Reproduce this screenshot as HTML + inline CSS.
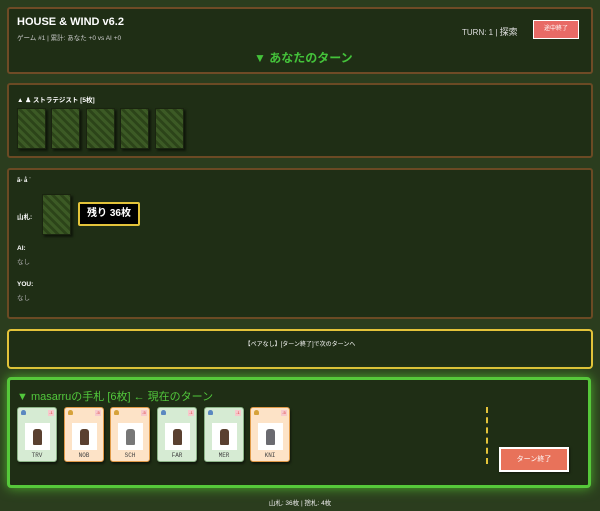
<!DOCTYPE html>
<html><head><meta charset="utf-8"><style>
*{box-sizing:border-box;margin:0;padding:0}
body{width:600px;height:511px;background:#2b3d1e;font-family:"Liberation Sans","Noto Sans CJK JP",sans-serif;color:#fff;position:relative;overflow:hidden}
.p{position:absolute;background:#1f2e15;border:2px solid #6b4a24;border-radius:3px}
.a{position:absolute;white-space:nowrap}
.back{position:absolute;width:29px;height:41px;border:1px solid #1a2410;background:repeating-linear-gradient(45deg,#3c5a25 0 3px,#2c4419 3px 6px);box-shadow:2px 2px 2px rgba(0,0,0,.5)}
.card{position:absolute;top:407px;width:40px;height:55px;border-radius:3px;box-shadow:1px 2px 2px rgba(0,0,0,.5)}
.g{background:#d6ebd3;border:1px solid #8cb487}
.o{background:#fde3c7;border:1px solid #e09a48}
.card .img{position:absolute;left:7px;top:15px;width:25px;height:27px;background:#fff}
.card .img i{position:absolute;left:8px;top:6px;width:9px;height:16px;background:#5a4030;border-radius:3px 3px 1px 1px}
.card .n{position:absolute;left:0;right:0;top:44px;text-align:center;font-size:6px;color:#444;font-family:"Liberation Mono",monospace}
.card .c{position:absolute;right:2px;top:2px;width:6px;height:6px;background:#f7c9cc;font-size:4px;color:#d33;text-align:center}
.card .t{position:absolute;left:3px;top:2px;width:5px;height:5px;border-radius:50% 50% 1px 1px}
</style></head><body>
<div class="p" style="left:7px;top:7px;width:586px;height:67px;border-color:#6f4b26"></div>
<div class="a" style="left:17px;top:16px;font-size:11px;font-weight:bold">HOUSE &amp; WIND v6.2</div>
<div class="a" style="left:17px;top:32px;font-size:6.5px;color:#ccc">ゲーム #1 | 累計: あなた +0 vs AI +0</div>
<div class="a" style="left:462px;top:25px;font-size:8px;color:#ddd">TURN: 1 | <span style="font-size:9px">探索</span></div>
<div class="a" style="left:533px;top:20px;width:46px;height:19px;background:#e86a66;border:1px solid #fff;font-size:6px;text-align:center;line-height:17px">途中終了</div>
<div class="a" style="left:254px;top:49px;font-size:12px;font-weight:bold;color:#44c23a">▼ あなたのターン</div>

<div class="p" style="left:7px;top:83px;width:586px;height:75px"></div>
<div class="a" style="left:17px;top:94px;font-size:6.5px;font-weight:bold">▲ ♟ ストラテジスト [5枚]</div>
<div class="back" style="left:17px;top:108px"></div>
<div class="back" style="left:51px;top:108px"></div>
<div class="back" style="left:86px;top:108px"></div>
<div class="back" style="left:120px;top:108px"></div>
<div class="back" style="left:155px;top:108px"></div>

<div class="p" style="left:7px;top:168px;width:586px;height:151px"></div>
<div class="a" style="left:17px;top:178px;font-size:6px;font-weight:bold">ã-  å  ˙</div>
<div class="a" style="left:17px;top:211px;font-size:6.5px;font-weight:bold">山札:</div>
<div class="back" style="left:42px;top:194px"></div>
<div class="a" style="left:78px;top:202px;width:62px;height:24px;background:#000;border:2px solid #e3c33a;border-radius:2px;font-size:10px;font-weight:bold;text-align:center;line-height:20px">残り 36枚</div>
<div class="a" style="left:17px;top:245px;font-size:6.5px;font-weight:bold">AI:</div>
<div class="a" style="left:17px;top:256px;font-size:6.5px;color:#aaa">なし</div>
<div class="a" style="left:17px;top:281px;font-size:6.5px;font-weight:bold">YOU:</div>
<div class="a" style="left:17px;top:292px;font-size:6.5px;color:#aaa">なし</div>

<div class="p" style="left:7px;top:329px;width:586px;height:40px;border-color:#e3c33a;border-radius:4px"></div>
<div class="a" style="left:0;width:600px;top:339px;font-size:6px;text-align:center">【ペアなし】[ターン終了]で次のターンへ</div>

<div class="p" style="left:7px;top:377px;width:584px;height:111px;border:3px solid #56c83a;border-radius:4px;box-shadow:0 0 12px #4fae2e"></div>
<div class="a" style="left:17px;top:388px;font-size:11px;color:#52c83c">▼ masarruの手札 [6枚] ← 現在のターン</div>
<div class="card g" style="left:17px"><div class="t" style="background:#5a88c0"></div><div class="c">-1</div><div class="img"><i></i></div><div class="n">TRV</div></div>
<div class="card o" style="left:64px"><div class="t" style="background:#d6a23a"></div><div class="c">-5</div><div class="img"><i></i></div><div class="n">NOB</div></div>
<div class="card o" style="left:110px"><div class="t" style="background:#d6a23a"></div><div class="c">-5</div><div class="img"><i style="background:#777"></i></div><div class="n">SCH</div></div>
<div class="card g" style="left:157px"><div class="t" style="background:#5a88c0"></div><div class="c">-1</div><div class="img"><i></i></div><div class="n">FAR</div></div>
<div class="card g" style="left:204px"><div class="t" style="background:#5a88c0"></div><div class="c">-1</div><div class="img"><i></i></div><div class="n">MER</div></div>
<div class="card o" style="left:250px"><div class="t" style="background:#d6a23a"></div><div class="c">-5</div><div class="img"><i style="background:#6a6a70"></i></div><div class="n">KNI</div></div>
<div class="a" style="left:486px;top:407px;height:57px;border-left:2px dashed #e3c33a"></div>
<div class="a" style="left:499px;top:447px;width:70px;height:25px;background:#e8725a;border:2px solid #fff;font-size:7px;text-align:center;line-height:21px;box-shadow:1px 1px 2px rgba(0,0,0,.5)">ターン終了</div>

<div class="a" style="left:0;width:600px;top:497px;font-size:6.5px;text-align:center;color:#eee">山札: 36枚 | 捨札: 4枚</div>
</body></html>
